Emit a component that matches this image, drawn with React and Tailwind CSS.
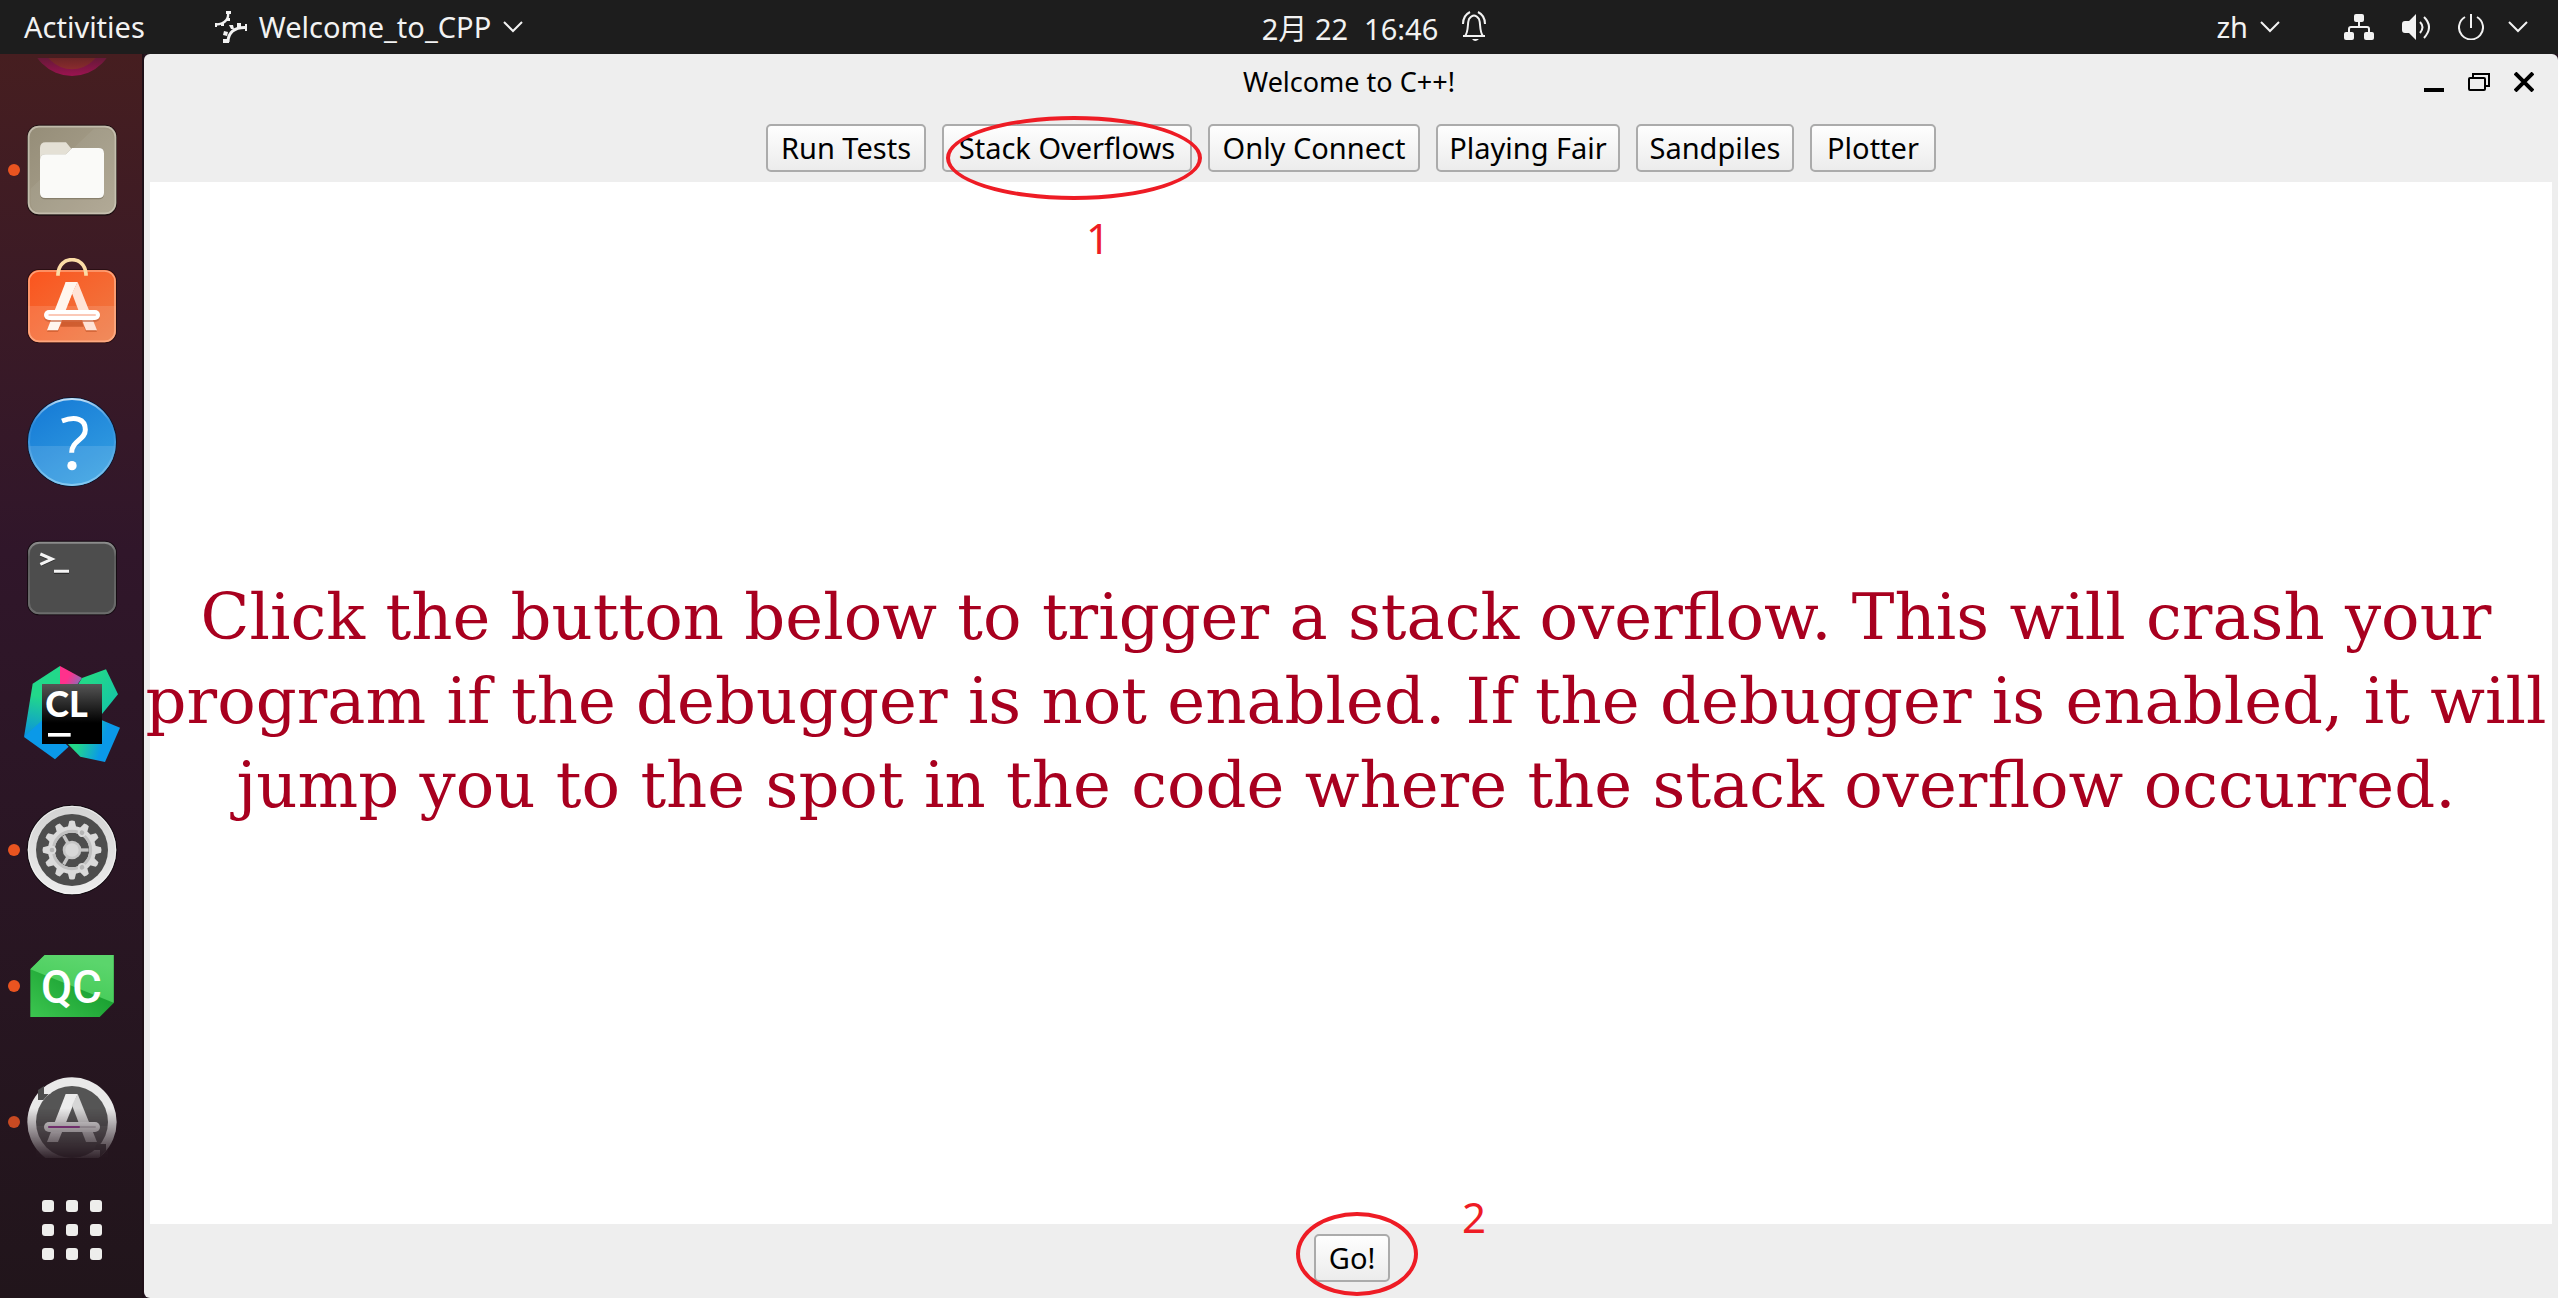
import React from "react";

const A_LEGS = (
  <>
    <path d="M197 156 H230 L174 301 H141 Z" fill="#fff6ee" />
    <path d="M216 190 L233 156 L291 301 H258 Z" fill="#ffe3d6" />
    <path d="M197 156 H233 L216 190 L203 222 Z" fill="#fff6ee" />
  </>
);

function BrowserIcon() {
  return (
    <svg className="h-5 w-24" viewBox="72 174 288 60" aria-hidden="true">
      <defs>
        <linearGradient id="brA" x1="0" y1="0" x2="0" y2="1">
          <stop offset="0.75" stopColor="#5c1a33" />
          <stop offset="1" stopColor="#9b1350" />
        </linearGradient>
        <linearGradient id="brB" x1="0" y1="0" x2="0" y2="1">
          <stop offset="0.8" stopColor="#6b2426" />
          <stop offset="1" stopColor="#8a2c2e" />
        </linearGradient>
      </defs>
      <circle cx="216" cy="101" r="127" fill="url(#brA)" />
      <circle cx="216" cy="118" r="90" fill="url(#brB)" />
    </svg>
  );
}

function FilesIcon() {
  return (
    <svg className="size-24" viewBox="72 366 288 288" aria-hidden="true">
      <defs>
        <linearGradient id="fiA" x1="0" y1="0" x2="1" y2="1">
          <stop offset="0" stopColor="#958d78" />
          <stop offset="1" stopColor="#aea692" />
        </linearGradient>
      </defs>
      <rect x="81" y="374" width="270" height="273" rx="36" fill="#1d0f12" />
      <rect x="83" y="377" width="266" height="266" rx="34" fill="url(#fiA)" />
      <path d="M282 386 L92 566 V600 Q92 636 120 638 H310 Q342 636 342 600 V420 Q340 386 310 386 Z" fill="#ffffff" opacity="0.05" />
      <rect x="86" y="380" width="260" height="260" rx="31" fill="none" stroke="#d2ccbe" strokeWidth="5" opacity="0.7" />
      <path d="M120 444 Q120 427 137 427 H198 L214 446 V500 H120 Z" fill="#e4e0d5" />
      <path d="M120 480 Q120 463 137 463 H198 L216 444 H296 Q312 444 312 460 V583 Q312 598 296 598 H136 Q120 598 120 583 Z" fill="#6f6855" opacity="0.6" />
      <path d="M120 480 Q120 463 137 463 H198 L216 444 H296 Q312 444 312 460 V579 Q312 594 296 594 H136 Q120 594 120 579 Z" fill="#fafaf8" />
    </svg>
  );
}

function SoftwareIcon() {
  return (
    <svg className="size-24" viewBox="72 84 288 288" aria-hidden="true">
      <defs>
        <linearGradient id="swA" x1="0" y1="0" x2="1" y2="1">
          <stop offset="0" stopColor="#fb541d" />
          <stop offset="1" stopColor="#ee7c46" />
        </linearGradient>
        <clipPath id="swC">
          <rect x="84" y="120" width="264" height="217" rx="34" />
        </clipPath>
      </defs>
      <rect x="81" y="117" width="270" height="223" rx="36" fill="#2a0f14" />
      <rect x="84" y="120" width="264" height="217" rx="34" fill="url(#swA)" />
      <g clipPath="url(#swC)">
        <rect x="84" y="228" width="264" height="110" fill="#fff" opacity="0.12" />
      </g>
      <rect x="87" y="123" width="258" height="211" rx="31" fill="none" stroke="#ffb28c" strokeWidth="5" opacity="0.8" />
      <path d="M174 137 V132 C176 104 194 89 216 89 S256 104 258 132 V137" fill="none" stroke="#fbdca6" strokeWidth="11" />
      <path d="M141 305 H174 L186 275 H246 L258 305 H291 L284 290 H148 Z" fill="#b8481c" opacity="0.6" />
      {A_LEGS}
      <rect x="132" y="246" width="168" height="30" rx="15" fill="#c05a34" opacity="0.6" />
      <rect x="132" y="240" width="168" height="30" rx="15" fill="#fff" />
      <rect x="145" y="252" width="143" height="6" rx="3" fill="#fbc9b8" />
    </svg>
  );
}

function HelpIcon() {
  return (
    <svg className="size-24" viewBox="72 492 288 288" aria-hidden="true">
      <defs>
        <linearGradient id="heA" x1="0.2" y1="0" x2="0.8" y2="1">
          <stop offset="0" stopColor="#167bd6" />
          <stop offset="1" stopColor="#35a0e2" />
        </linearGradient>
        <linearGradient id="heB" x1="0" y1="0" x2="0" y2="1">
          <stop offset="0" stopColor="#c3e0f6" />
          <stop offset="0.3" stopColor="#3c93dd" stopOpacity="0.4" />
          <stop offset="1" stopColor="#86caf2" />
        </linearGradient>
        <clipPath id="heC">
          <circle cx="216" cy="636" r="132" />
        </clipPath>
      </defs>
      <circle cx="216" cy="636" r="135" fill="#10162c" />
      <circle cx="216" cy="636" r="132" fill="url(#heA)" />
      <rect x="84" y="648" width="264" height="130" fill="#fff" opacity="0.12" clipPath="url(#heC)" />
      <circle cx="216" cy="636" r="129" fill="none" stroke="url(#heB)" strokeWidth="6" />
      <path d="M186 573 C226 558 256 566 256 599 C256 630 215 632 215 668" fill="none" stroke="#fff" strokeWidth="15" />
      <circle cx="216" cy="707" r="14" fill="#fff" />
    </svg>
  );
}

function TerminalIcon() {
  return (
    <svg className="size-24" viewBox="72 90 288 288" aria-hidden="true">
      <defs>
        <linearGradient id="teA" x1="0" y1="0" x2="0" y2="1">
          <stop offset="0" stopColor="#8c8c8c" />
          <stop offset="0.2" stopColor="#5c5c5c" />
          <stop offset="1" stopColor="#6c6c6c" />
        </linearGradient>
      </defs>
      <rect x="81" y="122" width="270" height="224" rx="37" fill="#150b12" />
      <rect x="84" y="126" width="264" height="217" rx="34" fill="#4d4d4d" />
      <rect x="87" y="128" width="258" height="212" rx="31" fill="none" stroke="url(#teA)" strokeWidth="6" />
      <path d="M121 165 L156 180 L121 196 M162 218 H207" fill="none" stroke="#2c2c2c" strokeWidth="8" />
      <path d="M121 162 L156 177 L121 193 M162 214 H207" fill="none" stroke="#f4f4f4" strokeWidth="9" />
    </svg>
  );
}

function CLionIcon() {
  return (
    <svg className="size-24" viewBox="72 498 288 288" aria-hidden="true">
      <defs>
        <linearGradient id="clA" gradientUnits="userSpaceOnUse" x1="130" y1="520" x2="90" y2="715">
          <stop offset="0.35" stopColor="#22d88a" />
          <stop offset="1" stopColor="#0a8fe0" />
        </linearGradient>
        <linearGradient id="clB" gradientUnits="userSpaceOnUse" x1="205" y1="530" x2="240" y2="550">
          <stop offset="0" stopColor="#ff318c" />
          <stop offset="1" stopColor="#8c6cb8" />
        </linearGradient>
        <linearGradient id="clC" gradientUnits="userSpaceOnUse" x1="240" y1="530" x2="350" y2="620">
          <stop offset="0.2" stopColor="#22d88a" />
          <stop offset="1" stopColor="#14c4a8" />
        </linearGradient>
        <linearGradient id="clD" gradientUnits="userSpaceOnUse" x1="225" y1="720" x2="325" y2="750">
          <stop offset="0.1" stopColor="#22d88a" />
          <stop offset="0.8" stopColor="#0a99e8" />
        </linearGradient>
        <linearGradient id="clE" x1="0" y1="0" x2="0" y2="1">
          <stop offset="0" stopColor="#555" />
          <stop offset="0.65" stopColor="#000" />
        </linearGradient>
      </defs>
      <path d="M180 498 L98 551 L72 711 L190 640 Z" fill="url(#clA)" />
      <path d="M72 711 L126 661 L206 740 L165 778 Z" fill="#0a99e8" />
      <path d="M180 498 L246 534 L220 570 H180 Z" fill="url(#clB)" />
      <path d="M246 534 L318 508 L354 583 L306 642 L230 560 Z" fill="url(#clC)" />
      <path d="M306 661 L360 683 L315 786 L241 770 L200 728 Z" fill="url(#clD)" />
      <rect x="126" y="552" width="180" height="180" fill="url(#clE)" />
      <text x="136" y="651" fontSize="108" fontWeight="900" fill="#fff" fontFamily="Lato, sans-serif">CL</text>
      <rect x="144" y="699" width="68" height="11" fill="#fff" />
    </svg>
  );
}

const TEETH = [0, 30, 60, 90, 120, 150, 180, 210, 240, 270, 300, 330];

function SettingsIcon() {
  return (
    <svg className="size-24" viewBox="72 96 288 288" aria-hidden="true">
      <defs>
        <linearGradient id="seA" x1="0" y1="0" x2="0" y2="1">
          <stop offset="0" stopColor="#d2d2d2" />
          <stop offset="1" stopColor="#ececec" />
        </linearGradient>
      </defs>
      <circle cx="216" cy="240" r="136" fill="#140c13" />
      <circle cx="216" cy="240" r="133" fill="url(#seA)" />
      <circle cx="216" cy="240" r="131" fill="none" stroke="#f6f6f6" strokeWidth="3" opacity="0.7" />
      <circle cx="216" cy="240" r="108" fill="#4d4d4d" />
      {TEETH.map((a) => (
        <path key={a} d="M202 176 L208 153 Q216 150 224 153 L230 176 Z" fill="#dadada" transform={`rotate(${a} 216 240)`} />
      ))}
      <circle cx="216" cy="240" r="62" fill="none" stroke="#dadada" strokeWidth="20" />
      <circle cx="216" cy="240" r="56" fill="none" stroke="#c0c0c0" strokeWidth="9" />
      {[0, 120, 240].map((a) => (
        <g key={a} transform={`rotate(${a} 216 240)`}>
          <path d="M240 240 H266" stroke="#c4c4c4" strokeWidth="10" />
          <circle cx="156" cy="240" r="13" fill="#dadada" />
          <circle cx="156" cy="240" r="7" fill="#b4b4b4" />
        </g>
      ))}
      <circle cx="216" cy="240" r="28" fill="#c6c6c6" />
      <circle cx="216" cy="240" r="20" fill="#d8d8d8" />
    </svg>
  );
}

function QtCreatorIcon() {
  return (
    <svg className="size-24" viewBox="72 504 288 288" aria-hidden="true">
      <defs>
        <linearGradient id="qcA" x1="0" y1="1" x2="1" y2="0">
          <stop offset="0" stopColor="#3cc650" />
          <stop offset="0.6" stopColor="#1ca233" />
        </linearGradient>
        <linearGradient id="qcB" x1="0" y1="1" x2="0.4" y2="0">
          <stop offset="0" stopColor="#3fc953" />
          <stop offset="1" stopColor="#5bd56c" />
        </linearGradient>
      </defs>
      <path d="M134 555 H341 V699 L299 741 H91 V598 Z" fill="url(#qcA)" />
      <path d="M134 555 H341 V698 L91 598 Z" fill="url(#qcB)" />
      <text x="214" y="698" textAnchor="middle" fontSize="136" fontWeight="500" fill="#fff" fontFamily="Roboto, sans-serif">QC</text>
    </svg>
  );
}

function UpdaterIcon() {
  return (
    <svg className="h-21 w-24" viewBox="72 102 288 252" aria-hidden="true">
      <defs>
        <linearGradient id="upF" gradientUnits="userSpaceOnUse" x1="0" y1="205" x2="0" y2="356">
          <stop offset="0" stopColor="#fff" />
          <stop offset="1" stopColor="#fff" stopOpacity="0.06" />
        </linearGradient>
        <mask id="upM" maskUnits="userSpaceOnUse" x="72" y="102" width="288" height="252">
          <rect x="72" y="102" width="288" height="252" fill="url(#upF)" />
        </mask>
      </defs>
      <g mask="url(#upM)">
        <circle cx="216" cy="246" r="134" fill="#e9e9e9" />
        <circle cx="216" cy="246" r="108" fill="#555" />
        <path d="M114 150 L132 138 V162 H146 L130 180 H114 Z" fill="#4d4d4d" />
        <path d="M132 146 V162 H150 L160 150 L142 138 Z" fill="#e9e9e9" />
        <path d="M318 312 H290 L282 330 H300 V350 L318 332 Z" fill="#4d4d4d" />
        <rect x="108" y="258" width="216" height="96" fill="#fff" opacity="0.07" />
        <path d="M197 162 H233 L174 306 H141 Z" fill="#ececec" />
        <path d="M216 196 L233 162 L291 306 H258 Z" fill="#d6d6d6" />
        <rect x="132" y="246" width="168" height="30" rx="15" fill="#e6e6e6" />
        <rect x="144" y="258" width="144" height="6" rx="3" fill="#c4c0c4" />
        <rect x="144" y="258" width="96" height="6" rx="3" fill="#9a3d97" />
      </g>
    </svg>
  );
}

const DOCK = [
  { label: "Files", Icon: FilesIcon, running: true },
  { label: "Software", Icon: SoftwareIcon },
  { label: "Help", Icon: HelpIcon },
  { label: "Terminal", Icon: TerminalIcon },
  { label: "CLion", Icon: CLionIcon },
  { label: "Settings", Icon: SettingsIcon, running: true },
  { label: "Qt Creator", Icon: QtCreatorIcon, running: true },
];

function Dock() {
  return (
    <nav
      aria-label="Dock"
      className="flex w-36 shrink-0 flex-col border-r-2 border-[#1f1018] bg-linear-to-b from-[#461e20] via-[#30162a] via-40% to-[#21151b] pt-1"
    >
      <button aria-label="Browser" className="flex h-11 items-start pl-6">
        <BrowserIcon />
      </button>
      {DOCK.map(({ label, Icon, running }) => (
        <button key={label} aria-label={label} className="flex h-34 items-center gap-1 pl-2">
          <span className={running ? "size-3 rounded-full bg-[#e95420]" : "size-3"} />
          <Icon />
        </button>
      ))}
      <button aria-label="Software Updater" className="flex h-26 items-end gap-1 pl-2">
        <span className="mb-[30px] size-3 rounded-full bg-[#c84a22]" />
        <UpdaterIcon />
      </button>
      <button aria-label="Show Applications" className="flex flex-1 items-center justify-center pt-1 pl-[2px]">
        <span className="grid grid-cols-3 gap-3">
          {TEETH.slice(0, 9).map((n) => (
            <span key={n} className="size-3 rounded-[3px] bg-[#eeeeec]" />
          ))}
        </span>
      </button>
    </nav>
  );
}

function Chevron() {
  return (
    <svg className="h-3 w-5" viewBox="0 0 20 12" fill="none" stroke="#f2f2f2" strokeWidth="2" aria-hidden="true">
      <path d="M1 1 L10 10 L19 1" />
    </svg>
  );
}

function GearsIcon() {
  return (
    <svg className="size-8" viewBox="0 0 32 32" fill="none" stroke="#f2f2f2" aria-hidden="true">
      <path d="M13 1 C14 7 11 13 1 13.500" strokeWidth="2.400" />
      <path d="M11 0 H16 V3 H11 Z M12 7 L15 7 V10 H12 Z M6 12 H9 V15 H6 Z M0 12 H2 V16 H0 Z" fill="#f2f2f2" stroke="none" />
      <path d="M13 31 C13 22 19 16 31 16.500" strokeWidth="3" />
      <path d="M8 28 H14 V32 H8 Z M9 20 L13 21 L12 25 L8 24 Z M14 14 L18 14 L19 18 L16 18 Z M22 12 H26 V17 H22 Z M30 13 H32 V20 H30 Z" fill="#f2f2f2" stroke="none" />
    </svg>
  );
}

function TopBar() {
  return (
    <header className="grid h-[54px] shrink-0 grid-cols-[1fr_auto_1fr] items-center bg-[#1d1d1d] pr-[30px] pl-6 text-[29px] leading-9 whitespace-nowrap text-[#f2f2f2]">
      <div className="flex items-center">
        <button>Activities</button>
        <button className="ml-[70px] flex items-center gap-3">
          <GearsIcon />
          Welcome_to_CPP
          <Chevron />
        </button>
      </div>
      <button className="flex items-center gap-6 pl-49">
        <span className="flex gap-4 pt-1">
          <span>2月 22</span>
          <span>16:46</span>
        </span>
        <svg className="h-8 w-6" viewBox="0 0 24 32" fill="none" stroke="#f2f2f2" strokeWidth="2" aria-hidden="true">
          <path d="M1 25 H23 M3 25 C7 20 5 13 7 8 Q12 1 17 8 C19 13 17 20 21 25" />
          <path d="M1 13 C1 7 4 3 8 1 M23 13 C23 7 20 3 16 1" />
          <path d="M10 28 H17 Q13 32 10 28 Z" fill="#f2f2f2" stroke="none" />
        </svg>
      </button>
      <div className="flex items-center justify-end">
        <button className="mr-16 flex items-center gap-3">
          zh
          <Chevron />
        </button>
        <button aria-label="System menu" className="flex items-center">
          <svg className="mr-7 h-[26px] w-[30px]" viewBox="0 0 30 26" aria-hidden="true">
            <path d="M15 7 V13 M5 19 V15 Q5 13 7 13 H23 Q25 13 25 15 V19" fill="none" stroke="#f2f2f2" strokeWidth="2" />
            <rect x="10" y="0" width="10" height="8" rx="2" fill="#f2f2f2" />
            <rect x="0" y="18" width="10" height="8" rx="2" fill="#f2f2f2" />
            <rect x="20" y="18" width="10" height="8" rx="2" fill="#f2f2f2" />
          </svg>
          <svg className="mr-7 h-[26px] w-7" viewBox="0 0 28 26" fill="none" stroke="#f2f2f2" strokeWidth="2" aria-hidden="true">
            <path d="M3 7 H7 L14 0 V26 L7 19 H3 Q0 19 0 16 V10 Q0 7 3 7 Z" fill="#f2f2f2" stroke="none" />
            <path d="M18 8 Q23 13 18 19 M22 3 Q32 13 22 24" />
          </svg>
          <svg className="mr-6 h-[26px] w-[26px]" viewBox="0 0 26 26" fill="none" stroke="#f2f2f2" strokeWidth="2" aria-hidden="true">
            <path d="M13 0 V14 M7 3 A12 12 0 1 0 19 3" />
          </svg>
          <Chevron />
        </button>
      </div>
    </header>
  );
}

function ToolButton({ children, className }) {
  return (
    <button
      className={`${className} h-12 rounded-[5px] border-2 border-[#ababab] bg-linear-to-b from-[#fefefe] to-[#ececec] text-[29px] leading-10 whitespace-nowrap text-black`}
    >
      {children}
    </button>
  );
}

export default function App() {
  return (
    <div className="flex h-screen flex-col overflow-hidden bg-[#241520] font-['Noto_Sans','Noto_Sans_CJK_SC',sans-serif]">
      <TopBar />
      <div className="flex min-h-0 flex-1">
        <Dock />
        <main className="flex min-w-0 flex-1 flex-col rounded-t-md rounded-bl-md bg-[#eeeeee]">
          <div className="grid h-14 shrink-0 grid-cols-[1fr_auto_1fr] items-center pr-1">
            <span />
            <h1 className="text-[27px] leading-9 text-black">Welcome to C++!</h1>
            <div className="flex items-center justify-end gap-6 pr-5">
              <button aria-label="Minimize">
                <svg className="size-5" viewBox="0 0 20 20" aria-hidden="true">
                  <rect y="16" width="20" height="4" />
                </svg>
              </button>
              <button aria-label="Restore">
                <svg className="h-5 w-[22px]" viewBox="0 0 22 20" fill="none" stroke="#000" strokeWidth="2" aria-hidden="true">
                  <rect x="1" y="6" width="16" height="12" rx="1" />
                  <path d="M5 5 V2 H21 V14 H18" />
                </svg>
              </button>
              <button aria-label="Close">
                <svg className="size-5" viewBox="0 0 20 20" stroke="#000" strokeWidth="4" aria-hidden="true">
                  <path d="M1 1 L19 19 M19 1 L1 19" />
                </svg>
              </button>
            </div>
          </div>
          <div className="flex shrink-0 justify-center gap-4 pt-[14px] pb-[10px]">
            <ToolButton className="w-40">Run Tests</ToolButton>
            <div className="relative flex">
              <ToolButton className="w-[250px]">Stack Overflows</ToolButton>
              <span className="pointer-events-none absolute -top-2 left-1 z-10 h-[84px] w-64 rounded-[50%] border-4 border-[#ee1c25]" />
              <span className="pointer-events-none absolute top-[93px] left-36 z-10 text-[42px] leading-[42px] text-[#ee1c25]">1</span>
            </div>
            <ToolButton className="w-[212px]">Only Connect</ToolButton>
            <ToolButton className="w-[184px]">Playing Fair</ToolButton>
            <ToolButton className="w-[158px]">Sandpiles</ToolButton>
            <ToolButton className="w-[126px]">Plotter</ToolButton>
          </div>
          <section className="mx-[6px] flex min-h-0 flex-1 flex-col items-center justify-center bg-white pr-[10px] pb-1 font-['DejaVu_Serif',serif] text-[64px] leading-[84px] text-[#a8001f]">
            <p className="w-max text-center whitespace-pre">
              {"Click the button below to trigger a stack overflow. This will crash your\n"}
              {"program if the debugger is not enabled. If the debugger is enabled, it will\n"}
              {"jump you to the spot in the code where the stack overflow occurred."}
            </p>
          </section>
          <div className="flex shrink-0 justify-center pt-[10px] pb-4 pl-[2px]">
            <div className="relative flex">
              <ToolButton className="w-19">Go!</ToolButton>
              <span className="pointer-events-none absolute -top-[22px] -left-[18px] z-10 h-[84px] w-[122px] rounded-[50%] border-4 border-[#ee1c25]" />
              <span className="pointer-events-none absolute -top-[38px] left-[148px] z-10 text-[42px] leading-[42px] text-[#ee1c25]">2</span>
            </div>
          </div>
        </main>
      </div>
    </div>
  );
}
